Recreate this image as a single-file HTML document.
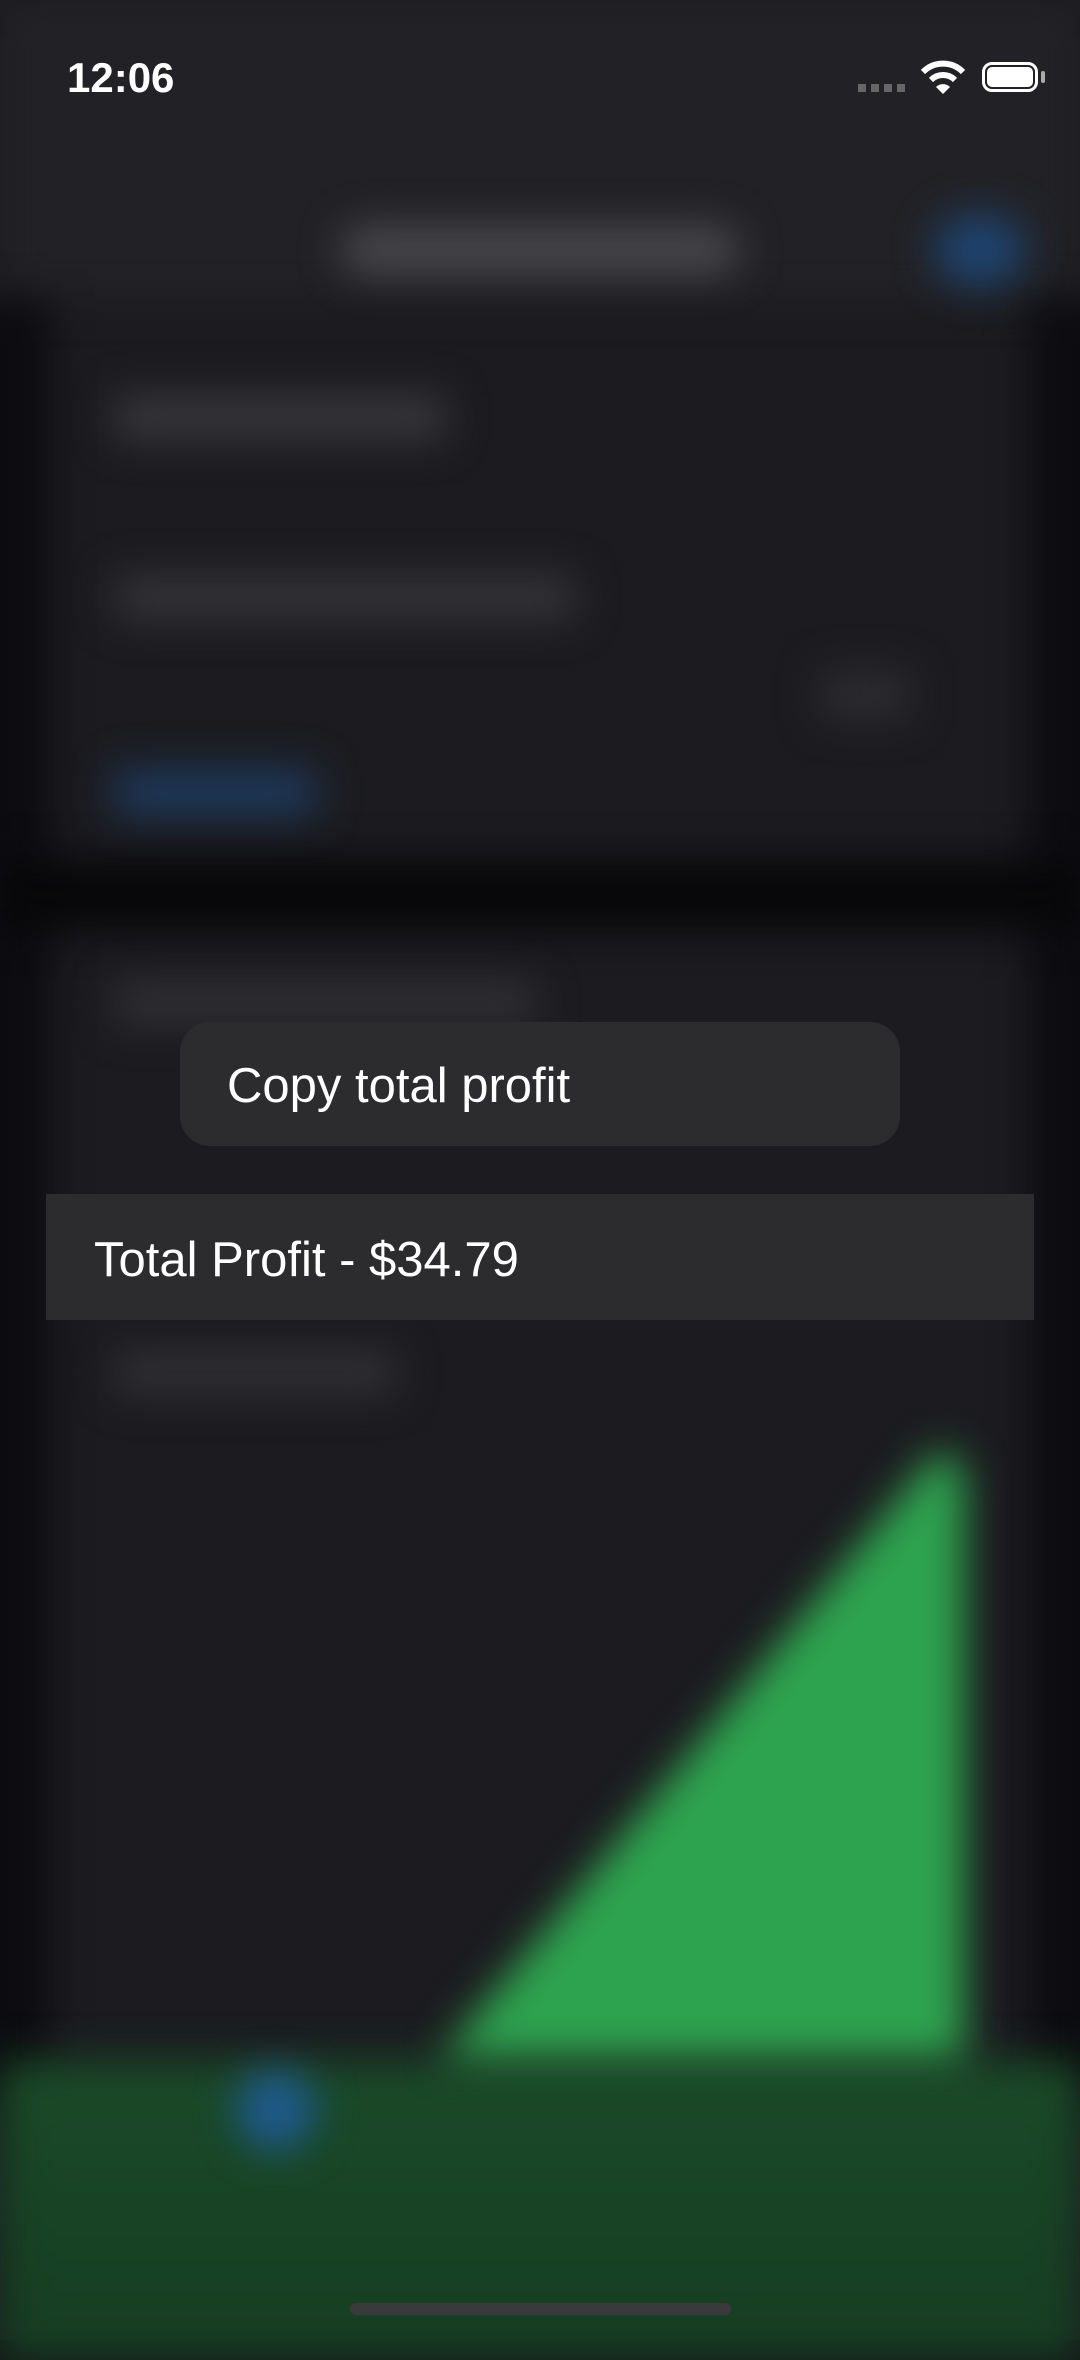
<!DOCTYPE html>
<html><head><meta charset="utf-8"><style>
html,body{margin:0;padding:0;width:1080px;height:2340px;overflow:hidden;background:#151518;font-family:"Liberation Sans",sans-serif;}
.abs{position:absolute;}
.blur{filter:blur(20px);}
</style></head><body>
<div class="abs" style="left:0;top:0;width:1080px;height:2340px;background:#1c1c20;"></div>
<div class="abs blur" style="left:0;top:0;width:1080px;height:300px;background:#222226;"></div>
<div class="abs blur" style="left:-40px;top:300px;width:90px;height:1800px;background:#0c0c10;"></div>
<div class="abs blur" style="left:1030px;top:300px;width:90px;height:1800px;background:#0c0c10;"></div>
<div class="abs blur" style="left:0;top:860px;width:1080px;height:70px;background:#070709;"></div>
<div class="abs blur" style="left:340px;top:225px;width:400px;height:50px;border-radius:25px;background:#48484c;"></div>
<div class="abs blur" style="left:935px;top:215px;width:90px;height:70px;border-radius:40px;background:#1e4470;"></div>
<div class="abs blur" style="left:115px;top:395px;width:330px;height:45px;background:#38383c;"></div>
<div class="abs blur" style="left:115px;top:575px;width:460px;height:45px;background:#343438;"></div>
<div class="abs blur" style="left:115px;top:770px;width:200px;height:45px;background:#1e3a5e;"></div>
<div class="abs blur" style="left:820px;top:670px;width:90px;height:50px;background:#2c2c30;"></div>
<div class="abs blur" style="left:115px;top:980px;width:420px;height:45px;background:#303034;"></div>
<div class="abs blur" style="left:115px;top:1350px;width:280px;height:45px;background:#303034;"></div>
<div class="abs blur" style="left:0;top:2060px;width:1080px;height:300px;background:linear-gradient(#1a4a28,#163d22);"></div>
<svg class="abs blur" style="left:0;top:0;" width="1080" height="2340"><polygon points="440,2058 940,1447 965,1470 965,2058" fill="#2ea34f"/></svg>
<div class="abs blur" style="left:236px;top:2070px;width:80px;height:80px;border-radius:40px;background:#1e5a8e;"></div>
<div class="abs" style="left:350px;top:2303px;width:381px;height:12px;border-radius:6px;background:#3a3a3c;"></div>
<div class="abs" style="left:67px;top:54px;font-size:42px;font-weight:bold;color:#fff;">12:06</div>
<div class="abs" style="left:858px;top:84px;width:48px;height:8px;background:repeating-linear-gradient(90deg,#666 0 8px,transparent 8px 13px);"></div>
<svg class="abs" style="left:920px;top:60px;" width="46" height="36" viewBox="0 0 46 36"><path d="M3 12 A28 28 0 0 1 43 12" stroke="#fff" stroke-width="6" fill="none"/><path d="M11 20 A17 17 0 0 1 35 20" stroke="#fff" stroke-width="6" fill="none"/><path d="M23 34 L16 27 A10 10 0 0 1 30 27 Z" fill="#fff"/></svg>
<div class="abs" style="left:982px;top:62px;width:56px;height:30px;border:3px solid #fff;border-radius:10px;box-sizing:border-box;"></div>
<div class="abs" style="left:987px;top:67px;width:46px;height:20px;background:#fff;border-radius:5px;"></div>
<div class="abs" style="left:1041px;top:71px;width:4px;height:12px;background:#aaa;border-radius:2px;"></div>
<div class="abs" style="left:180px;top:1022px;width:720px;height:124px;background:#2c2c2e;border-radius:30px;"></div>
<div class="abs" style="left:227px;top:1058px;font-size:49px;color:#fff;">Copy total profit</div>
<div class="abs" style="left:46px;top:1194px;width:988px;height:126px;background:#2c2c2e;"></div>
<div class="abs" style="left:94px;top:1232px;font-size:49px;color:#fff;">Total Profit - $34.79</div>
</body></html>
